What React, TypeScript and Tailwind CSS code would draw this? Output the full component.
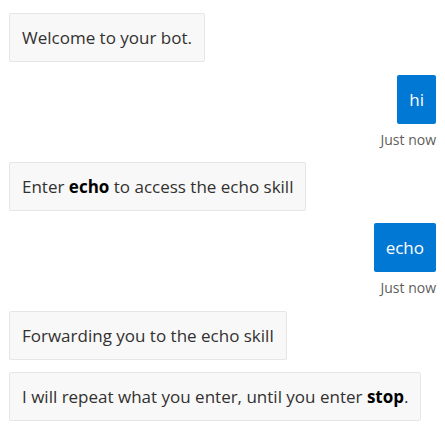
const FONT = "font-['Open_Sans','Noto_Sans',sans-serif]";

function BotBubble({ children }: { children: React.ReactNode }) {
  return (
    <div className="flex">
      <div className="flex h-[49px] items-center rounded-[2px] border border-[#e6e6e6] bg-[#f8f8f8] px-3 text-[17px] text-[#323130]">
        <span>{children}</span>
      </div>
    </div>
  );
}

function UserBubble({ text }: { text: string }) {
  return (
    <div className="flex flex-col items-end">
      <div className="flex h-[49px] items-center rounded-[2px] bg-[#0078d4] px-3 text-[17px] text-white">
        {text}
      </div>
      <div className="mt-[6px] text-[14px] leading-[20px] text-[#605e5c]">Just now</div>
    </div>
  );
}

export default function App() {
  return (
    <div className={`${FONT} h-[428px] w-[445px] bg-white px-[9px] pt-[13px]`}>
      <BotBubble>Welcome to your bot.</BotBubble>
      <div className="mt-[13px]">
        <UserBubble text="hi" />
      </div>
      <div className="mt-[12px]">
        <BotBubble>
          Enter <b className="font-bold text-black">echo</b> to access the echo skill
        </BotBubble>
      </div>
      <div className="mt-[12px]">
        <UserBubble text="echo" />
      </div>
      <div className="mt-[13px]">
        <BotBubble>Forwarding you to the echo skill</BotBubble>
      </div>
      <div className="mt-[12px]">
        <BotBubble>
          I will repeat what you enter, until you enter <b className="font-bold text-black">stop</b>.
        </BotBubble>
      </div>
    </div>
  );
}
